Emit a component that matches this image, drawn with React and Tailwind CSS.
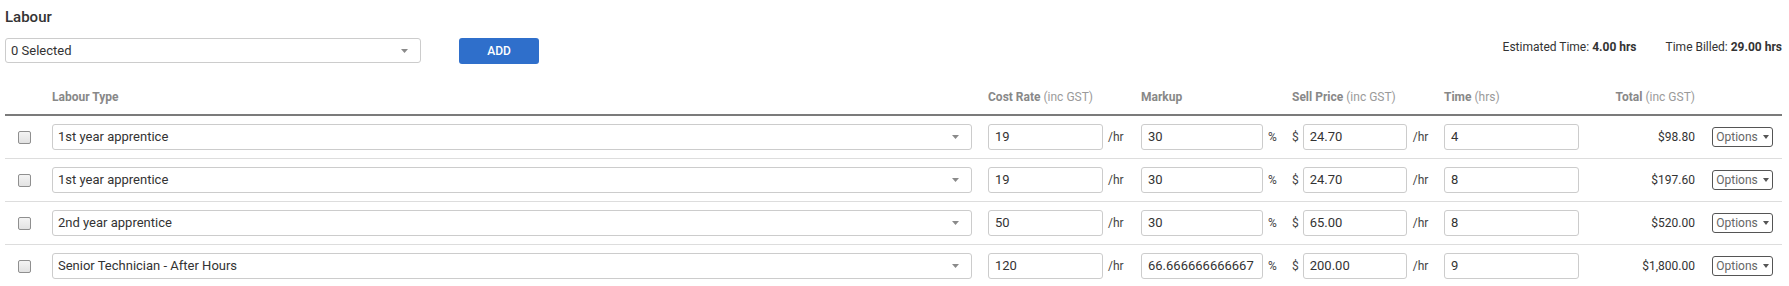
import React from "react";

const rows = [
  { type: "1st year apprentice", cost: "19", markup: "30", sell: "24.70", time: "4", total: "$98.80" },
  { type: "1st year apprentice", cost: "19", markup: "30", sell: "24.70", time: "8", total: "$197.60" },
  { type: "2nd year apprentice", cost: "50", markup: "30", sell: "65.00", time: "8", total: "$520.00" },
  { type: "Senior Technician - After Hours", cost: "120", markup: "66.666666666667", sell: "200.00", time: "9", total: "$1,800.00" },
];

function Caret({ className = "", w = 7, h = 4 }) {
  return (
    <svg width={w} height={h} viewBox={`0 0 ${w} ${h}`} className={className}>
      <path d={`M0 0 L${w} 0 L${w / 2} ${h} Z`} fill="currentColor" />
    </svg>
  );
}

function TextBox({ value, w }) {
  return (
    <div
      className={`${w} h-[26px] border border-[#cccccc] rounded-[3px] bg-white flex items-center pl-[6px] text-[13px] text-[#333]`}
    >
      {value}
    </div>
  );
}

function SelectBox({ value, w, h = "h-[26px]" }) {
  return (
    <div
      className={`${w} ${h} border border-[#cccccc] rounded-[3px] bg-white flex items-center justify-between pl-[5px] pr-[12px] text-[13px] text-[#333]`}
    >
      <span>{value}</span>
      <Caret className="text-[#8a8a8a]" />
    </div>
  );
}

export default function App() {
  return (
    <div className="w-[1789px] h-[286px] overflow-hidden bg-white font-['Roboto',sans-serif] pl-[5px] pr-[7px]">
      <div className="pt-[7px] text-[15px] leading-[20px] font-medium text-[#333]">Labour</div>

      <div className="mt-[11px] flex items-start">
        <SelectBox value="0 Selected" w="w-[416px]" h="h-[25px]" />
        <button className="ml-[38px] w-[80px] h-[26px] rounded-[3px] bg-[#2f6fcb] text-white text-[12px] font-medium">
          ADD
        </button>
        <div className="ml-auto flex gap-[29px] pt-[1px] text-[12px] leading-[16px] text-[#333]">
          <span>
            Estimated Time: <b className="font-bold">4.00 hrs</b>
          </span>
          <span>
            Time Billed: <b className="font-bold">29.00 hrs</b>
          </span>
        </div>
      </div>

      <div className="flex pt-[25px] pb-[9px] text-[12px] leading-[16px] text-[#888] font-bold border-b-2 border-[#7b7b7b]">
        <div className="w-[47px]" />
        <div className="w-[936px]">Labour Type</div>
        <div className="w-[153px]">
          Cost Rate <span className="font-normal text-[#9a9a9a]">(inc GST)</span>
        </div>
        <div className="w-[151px]">Markup</div>
        <div className="w-[152px]">
          Sell Price <span className="font-normal text-[#9a9a9a]">(inc GST)</span>
        </div>
        <div className="w-[136px]">
          Time <span className="font-normal text-[#9a9a9a]">(hrs)</span>
        </div>
        <div className="w-[115px] text-right">
          Total <span className="font-normal text-[#9a9a9a]">(inc GST)</span>
        </div>
      </div>

      {rows.map((r, i) => (
        <div key={i} className="flex items-center py-[8px] border-b border-[#dddddd] text-[12px] text-[#444]">
          <div className="w-[47px] flex">
            <div className="ml-[13px] w-[13px] h-[13px] rounded-[2px] border border-[#8f8f8f] bg-gradient-to-b from-[#f4f4f4] to-[#e2e2e2]" />
          </div>
          <div className="w-[936px]">
            <SelectBox value={r.type} w="w-[920px]" />
          </div>
          <div className="w-[153px] flex items-center">
            <TextBox value={r.cost} w="w-[115px]" />
            <span className="ml-[5px]">/hr</span>
          </div>
          <div className="w-[151px] flex items-center">
            <TextBox value={r.markup} w="w-[122px]" />
            <span className="ml-[5px]">%</span>
          </div>
          <div className="w-[152px] flex items-center">
            <span>$</span>
            <div className="ml-[4px]">
              <TextBox value={r.sell} w="w-[104px]" />
            </div>
            <span className="ml-[6px]">/hr</span>
          </div>
          <div className="w-[136px]">
            <TextBox value={r.time} w="w-[135px]" />
          </div>
          <div className="w-[115px] text-right text-[#333]">{r.total}</div>
          <div className="ml-[17px] w-[61px] h-[20px] border border-[#555] rounded-[3px] flex items-center justify-center gap-[5px] text-[12px] text-[#666]">
            <span>Options</span>
            <Caret className="text-[#555]" w={6} h={4} />
          </div>
        </div>
      ))}
    </div>
  );
}
